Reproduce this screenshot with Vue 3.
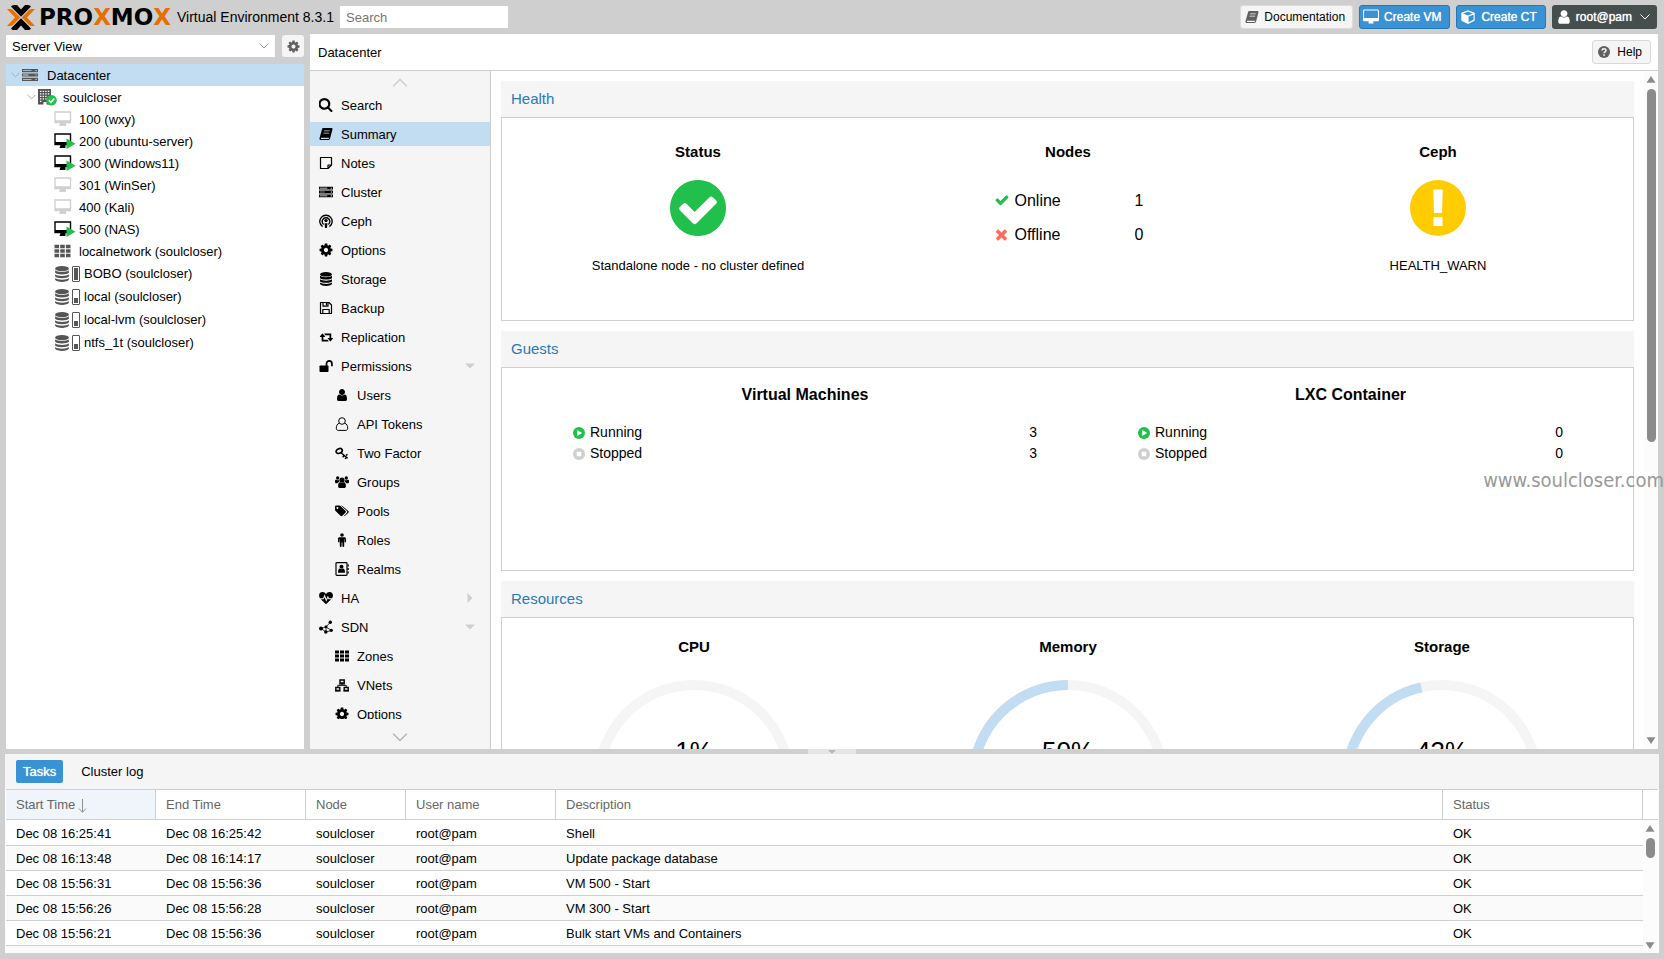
<script setup>
import { h, ref } from 'vue'

const icons = {
  search: { box: '128 128 1664 1664', body: '<path d="M1216 832q0-185-131.5-316.5t-316.5-131.5-316.5 131.5-131.5 316.5 131.5 316.5 316.5 131.5 316.5-131.5 131.5-316.5zm512 832q0 52-38 90t-90 38q-54 0-90-38l-343-342q-179 124-399 124-143 0-273.5-55.5t-225-150-150-225-55.5-273.5 55.5-273.5 150-225 225-150 273.5-55.5 273.5 55.5 225 150 150 225 55.5 273.5q0 220-124 399l343 343q37 37 37 90z"/>' },
  user: { box: '0 0 1792 1792', body: '<path d="M1536 1399q0 109-62.5 187t-150.5 78h-854q-88 0-150.5-78t-62.5-187q0-85 8.5-160.5t31.5-152 58.5-131 94-89 134.5-34.5q131 128 313 128t313-128q76 0 134.5 34.5t94 89 58.5 131 31.5 152 8.5 160.5zm-256-887q0 159-112.5 271.5t-271.5 112.5-271.5-112.5-112.5-271.5 112.5-271.5 271.5-112.5 271.5 112.5 112.5 271.5z"/>' },
  userOutline: { box: '0 0 14 14', body: '<g fill="none" stroke="currentColor"><circle cx="7" cy="4" r="3.3"/><path d="M4.2 6.2C2 7 1.3 9 1.3 11.3 1.3 12.6 2 13.4 3.2 13.4h7.6c1.200 0 1.900-.8 1.900-2.100 0-2.300-.7-4.300-2.900-5.100"/></g>' },
  cog: { box: '64 64 1664 1664', body: '<path fill-rule="evenodd" d="M1152 896q0-106-75-181t-181-75-181 75-75 181 75 181 181 75 181-75 75-181zm512-109v222q0 12-8 23t-20 13l-185 28q-19 54-39 91 35 50 107 138 10 12 10 25t-9 23q-27 37-99 108t-94 71q-12 0-26-9l-138-108q-44 23-91 38-16 136-29 186-7 28-36 28h-222q-14 0-24.500-8.500t-11.500-21.500l-28-184q-49-16-90-37l-141 107q-10 9-25 9-14 0-25-11-126-114-165-168-7-10-7-23 0-12 8-23 15-21 51-66.500t54-70.500q-27-50-41-99l-183-27q-13-2-21-12.500t-8-23.500v-222q0-12 8-23t19-13l186-28q14-46 39-92-40-57-107-138-10-12-10-24 0-10 9-23 26-36 98.500-107.500t94.500-71.500q13 0 26 10l138 107q44-23 91-38 16-136 29-186 7-28 36-28h222q14 0 24.500 8.500t11.500 21.500l28 184q49 16 90 37l142-107q9-9 24-9 13 0 25 10 129 119 165 170 7 8 7 22 0 12-8 23-15 21-51 66.500t-54 70.500q26 50 41 98l183 28q13 2 21 12.500t8 23.500z"/>' },
  desktop: { box: '-64 -64 1920 1920', body: '<path fill-rule="evenodd" d="M1728 992v-832q0-13-9.500-22.500t-22.500-9.500h-1600q-13 0-22.500 9.500t-9.500 22.500v832q0 13 9.500 22.500t22.500 9.500h1600q13 0 22.500-9.500t9.500-22.500zm128-832v1088q0 66-47 113t-113 47h-544q0 37 16 77.500t32 71 16 43.500q0 26-19 45t-45 19h-512q-26 0-45-19t-19-45q0-14 16-44t32-70 16-78h-544q-66 0-113-47t-47-113v-1088q0-66 47-113t113-47h1600q66 0 113 47t47 113z"/>' },
  book: { box: '0 0 14 14', body: '<path fill-rule="evenodd" d="M4.500 1h8c.8 0 1.200.6 1 1.300L11 11.800c-.2.700-.8 1.200-1.500 1.200H2C.9 13 .2 12.200.5 11.200L3 2.200C3.200 1.500 3.800 1 4.500 1ZM5.200 3.600l-.2.700h5.600l.2-.7ZM4.600 5.700l-.2.700H10l.2-.7ZM2 10.700c-.3.700 0 1.300.7 1.300h6.600c.4 0 .7-.3.800-.7l.2-.6Z"/>' },
  note: { box: '0 0 14 14', body: '<path d="M1.500 1.500h11v7.500l-3.500 3.500h-7.500zM12.500 9H9v3.500" fill="none" stroke="currentColor" stroke-width="1.200" stroke-linejoin="round"/>' },
  server: { box: '0 0 16 14', body: '<path fill-rule="evenodd" d="M0 1h16v3.200H0ZM0 5.400h16v3.200H0ZM0 9.800h16V13H0Z M1 2.200v.8h8.500v-.8ZM1 6.600v.8h5.500v-.8ZM1 11v.8h8.500V11ZM13.500 2v1.200h1.200V2ZM13.500 6.400v1.200h1.200V6.400ZM13.500 10.800V12h1.200v-1.200Z"/>' },
  ceph: { box: '0 0 14 14', body: '<g fill="none" stroke="currentColor" stroke-width="1.400"><path d="M3.600 12.600A6.200 6.200 0 1 1 10.400 12.600"/><path d="M4.600 10.500A3.800 3.800 0 1 1 9.400 10.500"/></g><circle cx="7" cy="6.600" r="1.700"/><path d="M5.500 9.200h3L8 14H6Z"/>' },
  database: { box: '0 0 14 14', body: '<ellipse cx="7" cy="2.300" rx="6" ry="2.300"/><path d="M1 3.800C2.500 5.700 11.500 5.700 13 3.800V6C11.500 8 2.500 8 1 6ZM1 7.300C2.500 9.200 11.500 9.200 13 7.300V9.200C11.500 11.200 2.500 11.200 1 9.200ZM1 10.600C2.500 12.500 11.500 12.500 13 10.600V12.100C11.500 14.600 2.500 14.600 1 12.100Z"/>' },
  floppy: { box: '0 0 14 14', body: '<g fill="none" stroke="currentColor" stroke-width="1.200" stroke-linejoin="round"><path d="M1.500 1.500h8.500l2.500 2.500v8.500h-11zM3.800 12.500v-4h6.400v4M4 1.500v3.700h5V1.500"/></g><path d="M6.800 2h1.400v2.300H6.800z"/>' },
  retweet: { box: '-64 64 2048 1664', body: '<path d="M1344 1504q0 13-9.500 22.500t-22.500 9.500h-960q-8 0-13.500-2t-9-7-5.500-8-3-11.500-1-11.500v-600h-192q-26 0-45-19t-19-45q0-24 15-41l320-384q19-22 49-22t49 22l320 384q15 17 15 41 0 26-19 45t-45 19h-192v384h576q16 0 25 11l160 192q7 10 7 21zm640-416q0 24-15 41l-320 384q-20 23-49 23t-49-23l-320-384q-15-17-15-41 0-26 19-45t45-19h192v-384h-576q-16 0-25-12l-160-192q-7-9-7-20 0-13 9.500-22.500t22.500-9.500h960q8 0 13.500 2t9 7 5.500 8 3 11.500 1 11.500v600h192q26 0 45 19t19 45z"/>' },
  unlock: { box: '0 0 14 14', body: '<rect x="0.500" y="6.500" width="9" height="6.500" rx="0.800"/><path d="M7.500 7V4.600a2.700 2.700 0 0 1 5.400 0v2.600" fill="none" stroke="currentColor" stroke-width="1.700"/>' },
  key: { box: '0 0 14 14', body: '<g fill="none" stroke="currentColor"><ellipse cx="4.200" cy="5" rx="3.200" ry="2.300" transform="rotate(-25 4.200 5)" stroke-width="1.700"/><path d="M6.300 7l6.300 5.300M9.200 9.400l-1.500 1.800M11.400 11.200l-1.300 1.700M11 9.300l1.500-1" stroke-width="1.500"/></g>' },
  group: { box: '0 0 15 14', body: '<circle cx="7.500" cy="5" r="2.700"/><circle cx="2.900" cy="2.700" r="1.800"/><circle cx="12.100" cy="2.700" r="1.800"/><path d="M3.300 11.200C3.300 8.800 4.200 7.200 5.500 7.200c1.200 1 2.800 1 4 0 1.300 0 2.200 1.600 2.200 4 0 1.300-.7 2.300-1.900 2.300H5.200c-1.200 0-1.900-1-1.900-2.300ZM0 7V5.800C0 5 .5 4.500 1.300 4.600c1 .6 1.800.5 2.700.1 0 1 .3 1.800.8 2.400-1 .1-1.600.5-2 1.200H1.500C.5 8.300 0 7.800 0 7ZM15 7V5.800c0-.8-.5-1.300-1.300-1.200-1 .6-1.800.5-2.700.1 0 1-.3 1.800-.8 2.400 1 .1 1.600.5 2 1.200h1.300c1 0 1.500-.5 1.500-1.300Z"/>' },
  tags: { box: '0 0 15 14', body: '<path fill-rule="evenodd" d="M0 2.500C0 1.700.6 1.200 1.400 1.200H4.500c.7 0 1.300.3 1.800.8l5 4.900c.6.600.6 1.200 0 1.800L7.800 12.200c-.6.600-1.300.6-1.900 0L.9 7.200C.3 6.600 0 6 0 5.300ZM2.600 2.700a1 1 0 1 0 .01 0Z"/><path d="M6.500 1.200c.7 0 1.300.3 1.800.8l6 5c.6.600.6 1.200 0 1.800L10.800 12.200c-.5.500-1 .6-1.500.3l3.500-3.700c.5-.6.5-1.200 0-1.800Z"/>' },
  male: { box: '0 0 14 14', body: '<circle cx="7" cy="2" r="1.800"/><path d="M4.500 4.200h5c.9 0 1.500.6 1.500 1.500v3.500H9.600V6.300h-.4V13.300c0 .9-1.800.9-1.800 0V9.400h-.8v3.900c0 .9-1.800.9-1.800 0V6.300h-.4v2.900H3V5.700c0-.9.600-1.500 1.500-1.500Z"/>' },
  address: { box: '0 0 14 14', body: '<rect x="1" y="0.700" width="11" height="12.600" rx="0.800" fill="none" stroke="currentColor" stroke-width="1.200"/><path d="M12.500 2.500h1.300v2h-1.300zM12.500 6h1.300v2h-1.300zM12.500 9.500h1.300v2h-1.300z"/><circle cx="6.500" cy="4.700" r="2"/><path d="M3 10.700C3 8 3.800 6.800 5 6.600c1 .7 2 .7 3 0 1.200.2 2 1.400 2 4.100Z"/>' },
  heartbeat: { box: '0 0 14 14', body: '<path d="M7 13.200L1.800 8.200H4.700L5.600 6.200 7.200 10.800 8.900 7l.6 1.200h2.700ZM.9 7.200C-.8 4.200.2 1.200 3.500 1.100 5.200 1.100 6.200 2 7 2.900 7.800 2 8.800 1.100 10.500 1.100c3.300.1 4.300 3.100 2.600 6.100h-3L8.900 4.700 7.300 8.100 5.700 3.300 4.100 7.200Z"/>' },
  sdn: { box: '0 0 14 14', body: '<path d="M2 8.500L7 7l4.500-5M7 7v5M7 7l5.500 3.500M2 8.500L7 12l5.500-1.500" fill="none" stroke="currentColor" stroke-width="0.800"/><circle cx="2" cy="8.500" r="2"/><circle cx="7" cy="6.800" r="1.500"/><circle cx="11.300" cy="2.300" r="1.700"/><circle cx="6.800" cy="12" r="1.700"/><circle cx="12.300" cy="10.300" r="1.600"/>' },
  grid: { box: '0 0 14 14', body: '<path d="M0 1.500h4v3H0zM5 1.500h4v3H5zM10 1.500h4v3h-4zM0 5.500h4v3H0zM5 5.500h4v3H5zM10 5.500h4v3h-4zM0 9.500h4v3H0zM5 9.500h4v3H5zM10 9.500h4v3h-4z"/>' },
  vnets: { box: '0 0 14 14', body: '<g fill="none" stroke="currentColor"><path d="M5 2h4.200v3H5zM.8 9.500h4v3h-4zM9.200 9.500h4v3h-4z" stroke-width="1.400"/><path d="M7 5v2.300M2.800 9V7.300h8.400V9M4 6h6M0 13h5.600M8.400 13H14"/></g>' },
  cube: { box: '-1 -1 16 16', body: '<path d="M7 .3l6 2.300c.5.200.7.500.7 1v6.300c0 .5-.2.800-.6 1L7 13.900.9 10.900c-.4-.2-.6-.5-.6-1V3.600c0-.5.200-.8.700-1Z"/><path d="M7 1.700l5 1.900-5 1.900-5-1.900ZM7.600 6.600l4.900-1.900v5.100l-4.900 2.500Z" fill="#3892d4"/>' },
  help: { box: '0 0 14 14', body: '<circle cx="7" cy="7" r="7"/><path d="M4.700 5.200c.1-2.600 4.600-2.600 4.600.1 0 1.700-2.200 1.500-2.200 3.200" fill="none" stroke="#f5f5f5" stroke-width="1.800"/><rect x="6.100" y="9.700" width="1.900" height="1.700" fill="#f5f5f5"/>' },
  check: { box: '64 128 1664 1536', body: '<path d="M1671 566q0 40-28 68l-724 724-136 136q-28 28-68 28t-68-28l-136-136-362-362q-28-28-28-68t28-68l136-136q28-28 68-28t68 28l294 295 656-657q28-28 68-28t68 28l136 136q28 28 28 68z"/>' },
  times: { box: '192 192 1408 1408', body: '<path d="M1490 1322q0 40-28 68l-136 136q-28 28-68 28t-68-28l-294-294-294 294q-28 28-68 28t-68-28l-136-136q-28-28-28-68t28-68l294-294-294-294q-28-28-28-68t28-68l136-136q28-28 68-28t68 28l294 294 294-294q28-28 68-28t68 28l136 136q28 28 28 68t-28 68l-294 294 294 294q28 28 28 68z"/>' },
  ok: { box: '128 128 1536 1536', body: '<path fill-rule="evenodd" d="M1412 734q0-28-18-46l-91-90q-19-19-45-19t-45 19l-408 407-226-226q-19-19-45-19t-45 19l-91 90q-18 18-18 46 0 27 18 45l362 362q19 19 45 19 27 0 46-19l543-543q18-18 18-45zm252 162q0 209-103 385.500t-279.500 279.500-385.500 103-385.500-103-279.500-279.500-103-385.500 103-385.500 279.500-279.500 385.500-103 385.500 103 279.500 279.500 103 385.500z"/>' },
  warn: { box: '0 0 56 56', body: '<circle cx="28" cy="28" r="28"/><path d="M23.200 9.500h9.600l-.8 23.500h-8zM23.500 37h9v9h-9z" fill="#fff"/>' },
  play: { box: '0 0 12 12', body: '<circle cx="6" cy="6" r="6"/><path d="M4.200 3l5 3-5 3z" fill="#fff"/>' },
  stop: { box: '0 0 12 12', body: '<circle cx="6" cy="6" r="6"/><rect x="3.700" y="3.700" width="4.600" height="4.600" rx="0.500" fill="#fff"/>' },
  building: { box: '0 0 19 17', body: '<path fill-rule="evenodd" d="M0 0h13v15.500H8.500V13h-3v2.500H0ZM2 1.700v1.200h1.400V1.700ZM4.600 1.700v1.200H6V1.700ZM7.200 1.700v1.200h1.400V1.700ZM9.800 1.700v1.200h1.400V1.700ZM2 4.200v1.200h1.400V4.200ZM4.600 4.200v1.200H6V4.200ZM7.200 4.200v1.200h1.400V4.200ZM9.800 4.200v1.200h1.400V4.200ZM2 6.700v1.200h1.400V6.700ZM4.600 6.700v1.200H6V6.700ZM7.200 6.700v1.200h1.400V6.700ZM2 9.200v1.200h1.400V9.200ZM4.600 9.200v1.200H6V9.200ZM7.200 9.200v1.200h1.400V9.200ZM2 11.700v1.200h1.400v-1.200Z"/><circle cx="13.500" cy="11.300" r="5.300" fill="#21bf4b"/><path d="M10.900 11.300l2 2 3.400-3.700" fill="none" stroke="#fff" stroke-width="1.600"/>' },
  vmOff: { box: '0 0 22 16', body: '<path d="M1 1h15.500v10.500H1z" fill="#fff" stroke="#d0d0d0" stroke-width="1.400"/><path d="M1 9.300h15.500v2.500H1zM6 12h6v3H5z" fill="#d0d0d0"/>' },
  vmOn: { box: '0 0 22 16', body: '<path d="M1 1h15.500v10.500H1z" fill="#fff" stroke="#000" stroke-width="1.400"/><path d="M1 9h15.500v2.800H1zM6.500 12h5v3h-6z" fill="#000"/><path d="M12.500 5.500l9 5.200-9 5.200z" fill="#21bf4b"/>' },
  down: { box: '0 0 10 6', body: '<path d="M.5.500L5 5 9.500.500" fill="none" stroke="currentColor"/>' },
  up: { box: '0 0 10 6', body: '<path d="M.5 5.500L5 1 9.500 5.500" fill="none" stroke="currentColor"/>' },
  triDown: { box: '0 0 10 10', body: '<path d="M0 2.500h10L5 7.500z"/>' },
  triUp: { box: '0 0 10 10', body: '<path d="M0 8.500h10L5 1z"/>' },
  triDownTall: { box: '0 0 10 10', body: '<path d="M0 1.500h10L5 9z"/>' },
  triRight: { box: '0 0 10 10', body: '<path d="M2.500 0v10L7.500 5z"/>' },
  sort: { box: '0 0 9 15', body: '<path d="M4.500 0v14M.7 10.200l3.800 4 3.800-4" fill="none" stroke="currentColor"/>' }
}

const Icon = (props) => {
  const i = icons[props.name]
  return h('svg', { viewBox: i.box, fill: 'currentColor', 'aria-hidden': 'true', innerHTML: i.body })
}
Icon.props = ['name']

const view = ref('server')
const query = ref('')

const guests = [
  { name: '100 (wxy)', icon: 'vmOff' },
  { name: '200 (ubuntu-server)', icon: 'vmOn' },
  { name: '300 (Windows11)', icon: 'vmOn' },
  { name: '301 (WinSer)', icon: 'vmOff' },
  { name: '400 (Kali)', icon: 'vmOff' },
  { name: '500 (NAS)', icon: 'vmOn' }
]
const storages = [
  { name: 'BOBO (soulcloser)', used: 95 },
  { name: 'local (soulcloser)', used: 38 },
  { name: 'local-lvm (soulcloser)', used: 34 },
  { name: 'ntfs_1t (soulcloser)', used: 34 }
]
const menu = [
  { label: 'Search', icon: 'search' },
  { label: 'Summary', icon: 'book', active: true },
  { label: 'Notes', icon: 'note' },
  { label: 'Cluster', icon: 'server' },
  { label: 'Ceph', icon: 'ceph' },
  { label: 'Options', icon: 'cog' },
  { label: 'Storage', icon: 'database' },
  { label: 'Backup', icon: 'floppy' },
  { label: 'Replication', icon: 'retweet' },
  { label: 'Permissions', icon: 'unlock', arrow: 'triDown' },
  { label: 'Users', icon: 'user', sub: true },
  { label: 'API Tokens', icon: 'userOutline', sub: true },
  { label: 'Two Factor', icon: 'key', sub: true },
  { label: 'Groups', icon: 'group', sub: true },
  { label: 'Pools', icon: 'tags', sub: true },
  { label: 'Roles', icon: 'male', sub: true },
  { label: 'Realms', icon: 'address', sub: true },
  { label: 'HA', icon: 'heartbeat', arrow: 'triRight' },
  { label: 'SDN', icon: 'sdn', arrow: 'triDown' },
  { label: 'Zones', icon: 'grid', sub: true },
  { label: 'VNets', icon: 'vnets', sub: true },
  { label: 'Options', icon: 'cog', sub: true }
]
const guestStats = [
  { title: 'Virtual Machines', running: 3, stopped: 3, cls: 'vms' },
  { title: 'LXC Container', running: 0, stopped: 0, cls: 'lxc' }
]
const gauges = [
  { title: 'CPU', value: 1, arc: 0 },
  { title: 'Memory', value: 50, arc: 50 },
  { title: 'Storage', value: 43, arc: 43 }
]
const tasks = [
  ['Dec 08 16:25:41', 'Dec 08 16:25:42', 'soulcloser', 'root@pam', 'Shell', 'OK'],
  ['Dec 08 16:13:48', 'Dec 08 16:14:17', 'soulcloser', 'root@pam', 'Update package database', 'OK'],
  ['Dec 08 15:56:31', 'Dec 08 15:56:36', 'soulcloser', 'root@pam', 'VM 500 - Start', 'OK'],
  ['Dec 08 15:56:26', 'Dec 08 15:56:28', 'soulcloser', 'root@pam', 'VM 300 - Start', 'OK'],
  ['Dec 08 15:56:21', 'Dec 08 15:56:36', 'soulcloser', 'root@pam', 'Bulk start VMs and Containers', 'OK']
]
</script>

<template>
  <div class="app">
    <header class="top">
      <a class="logo" href="#" aria-label="Proxmox">
        <svg viewBox="0 0 28 25" aria-hidden="true">
          <path d="M4 1.500Q5 0 7 0H10L14 4.500 18 0H21Q23 0 24 1.500L14 11.800ZM4 23.500Q5 25 7 25H10L14 20.500 18 25H21Q23 25 24 23.500L14 13.200Z" fill="#000" />
          <path d="M0 4H3Q5 4 6 5L13.200 12.500 6 20Q5 21 3 21H0L8 12.500ZM28 4H25Q23 4 22 5L14.800 12.500 22 20Q23 21 25 21H28L20 12.500Z" fill="#e57000" />
        </svg>
        <span class="wordmark">PRO<b>X</b>MO<b>X</b></span>
      </a>
      <span class="version">Virtual Environment 8.3.1</span>
      <input v-model="query" class="search" type="text" placeholder="Search" aria-label="Search" />
      <div class="actions">
        <button class="btn doc"><Icon name="book" />Documentation</button>
        <button class="btn blue"><Icon name="desktop" class="wide" />Create VM</button>
        <button class="btn blue"><Icon name="cube" class="wide" />Create CT</button>
        <button class="btn dark"><Icon name="user" class="wide" />root@pam<Icon name="down" class="caret" /></button>
      </div>
    </header>

    <div class="work">
      <aside class="side">
        <div class="picker">
          <div class="select">
            <select v-model="view" aria-label="View">
              <option value="server">Server View</option>
              <option value="folder">Folder View</option>
            </select>
            <Icon name="down" class="caret" />
          </div>
          <button class="gear" aria-label="Tree settings"><Icon name="cog" /></button>
        </div>
        <ul class="tree">
          <li class="row root"><Icon name="down" class="twist" /><span class="slot"><Icon name="server" class="srv" /></span>Datacenter</li>
          <li class="row node"><Icon name="down" class="twist" /><span class="slot"><Icon name="building" class="bld" /></span>soulcloser</li>
          <li v-for="g in guests" :key="g.name" class="row leaf"><span class="slot"><Icon :name="g.icon" class="vm" /></span>{{ g.name }}</li>
          <li class="row leaf"><span class="slot"><Icon name="grid" class="net" /></span>localnetwork (soulcloser)</li>
          <li v-for="s in storages" :key="s.name" class="row leaf store">
            <Icon name="database" class="db" />
            <span class="usage"><i :style="{ height: s.used + '%' }"></i></span>{{ s.name }}
          </li>
        </ul>
      </aside>

      <section class="center">
        <div class="crumb">
          <span>Datacenter</span>
          <button class="btn help"><Icon name="help" />Help</button>
        </div>
        <div class="split">
          <nav class="menu" aria-label="Datacenter">
            <div class="scroller"><Icon name="up" /></div>
            <div class="items">
              <a v-for="(m, i) in menu" :key="i" href="#" :class="{ active: m.active, sub: m.sub }">
                <Icon :name="m.icon" class="mi" /><span>{{ m.label }}</span>
                <Icon v-if="m.arrow" :name="m.arrow" class="arrow" />
              </a>
            </div>
            <div class="scroller low"><Icon name="down" /></div>
          </nav>

          <main class="content">
            <section class="panel">
              <h2>Health</h2>
              <div class="body health">
                <div class="col">
                  <h3>Status</h3>
                  <Icon name="ok" class="big good" />
                  <p>Standalone node - no cluster defined</p>
                </div>
                <div class="col">
                  <h3>Nodes</h3>
                  <div class="nodes">
                    <Icon name="check" class="good" /><span>Online</span><span class="num">1</span>
                    <Icon name="times" class="bad" /><span>Offline</span><span class="num">0</span>
                  </div>
                </div>
                <div class="col">
                  <h3>Ceph</h3>
                  <Icon name="warn" class="big warn" />
                  <p>HEALTH_WARN</p>
                </div>
              </div>
            </section>

            <section class="panel">
              <h2>Guests</h2>
              <div class="body guests">
                <div v-for="g in guestStats" :key="g.title" :class="g.cls">
                  <h3>{{ g.title }}</h3>
                  <div class="stat"><Icon name="play" class="good" />Running<span>{{ g.running }}</span></div>
                  <div class="stat"><Icon name="stop" class="idle" />Stopped<span>{{ g.stopped }}</span></div>
                </div>
              </div>
            </section>

            <section class="panel">
              <h2>Resources</h2>
              <div class="body resources">
                <div v-for="g in gauges" :key="g.title">
                  <h3>{{ g.title }}</h3>
                  <svg class="gauge" viewBox="0 0 200 110" role="img" :aria-label="g.title">
                    <path d="M5 100A95 95 0 0 1 195 100" fill="none" stroke="#f5f5f5" stroke-width="10" />
                    <path v-if="g.arc" d="M5 100A95 95 0 0 1 195 100" fill="none" stroke="#c2ddf2" stroke-width="10" pathLength="100" :stroke-dasharray="g.arc + ' 200'" />
                    <text x="100" y="80" text-anchor="middle">{{ g.value }}%</text>
                  </svg>
                </div>
              </div>
            </section>
          </main>
          <div class="bar" aria-hidden="true">
            <Icon name="triUp" /><div class="track"><i class="thumb"></i></div><Icon name="triDownTall" />
          </div>
        </div>
      </section>
    </div>

    <div class="splitter"><button aria-label="Collapse log panel"><Icon name="triDown" /></button></div>

    <section class="log">
      <div class="tabs">
        <button class="on">Tasks</button>
        <button>Cluster log</button>
      </div>
      <div class="grid">
        <table>
          <colgroup>
            <col class="w150" /><col class="w150" /><col class="w100" /><col class="w150" /><col /><col class="w200" /><col class="w15" />
          </colgroup>
          <thead>
            <tr>
              <th class="sorted">Start Time<Icon name="sort" /></th>
              <th>End Time</th>
              <th>Node</th>
              <th>User name</th>
              <th>Description</th>
              <th>Status</th>
              <td></td>
            </tr>
          </thead>
          <tbody>
            <tr v-for="(t, i) in tasks" :key="i">
              <td v-for="(c, j) in t" :key="j">{{ c }}</td>
              <td class="gutter"></td>
            </tr>
            <tr>
              <td colspan="6"></td>
              <td class="gutter"></td>
            </tr>
          </tbody>
        </table>
        <div class="bar" aria-hidden="true">
          <Icon name="triUp" /><div class="track"><i class="thumb"></i></div><Icon name="triDownTall" />
        </div>
      </div>
    </section>

    <div class="watermark">www.soulcloser.com</div>
  </div>
</template>

<style>
body {
  margin: 0;
  overflow: hidden;
}
</style>

<style scoped>
* {
  box-sizing: border-box;
}
.app {
  display: flex;
  flex-direction: column;
  position: relative;
  height: 100vh;
  padding: 0 5px 6px;
  background: #cfcfcf;
  color: #000;
  font: 13px/17px "Liberation Sans", Arial, sans-serif;
  overflow: hidden;
}
svg {
  display: block;
  flex: none;
}
button,
input,
select {
  font: inherit;
  color: inherit;
  border: 0;
  padding: 0;
  margin: 0;
}
h2,
h3,
p,
ul {
  margin: 0;
  padding: 0;
}

.top {
  display: flex;
  align-items: center;
  flex: none;
  height: 34px;
  padding: 0 2px;
}
.logo {
  display: flex;
  align-items: center;
  flex: none;
  width: 170px;
  gap: 4px;
  color: #000;
  text-decoration: none;
}
.logo svg {
  width: 28px;
  height: 25px;
}
.wordmark {
  font: bold 23px/25px "DejaVu Sans", sans-serif;
}
.wordmark b {
  color: #e57000;
}
.version {
  width: 163px;
  font-size: 14px;
  white-space: nowrap;
}
.search {
  width: 168px;
  height: 22px;
  padding: 0 6px;
  background: #fff;
}
.search::placeholder {
  color: #767676;
  opacity: 1;
}
.actions {
  display: flex;
  gap: 6px;
  margin-left: auto;
}
.btn {
  display: flex;
  align-items: center;
  height: 24px;
  border-radius: 3px;
  font-size: 12px;
  white-space: nowrap;
}
.btn svg {
  width: 14px;
  height: 14px;
}
.btn svg.wide {
  width: 16px;
  height: 16px;
}
.doc {
  gap: 5px;
  padding: 0 7px 0 4px;
  border: 1px solid #dcdcdc;
  background: #f5f5f5;
}
.doc svg,
.help svg {
  color: #606060;
}
.blue {
  gap: 5px;
  padding: 0 8px 0 3px;
  border: 1px solid #2478b5;
  background: #3892d4;
  color: #fff;
  text-shadow: 0 0 1px #fff;
}
.dark {
  gap: 4px;
  padding: 0 7px 0 4px;
  background: #464d4d;
  color: #fff;
  text-shadow: 0 0 1px #fff;
}
.btn svg.caret {
  width: 10px;
  height: 6px;
  margin-left: 4px;
}

.work {
  display: flex;
  flex: 1;
  min-height: 0;
  gap: 6px;
  padding: 0 1px;
}
.side {
  display: flex;
  flex-direction: column;
  flex: none;
  width: 298px;
  padding-top: 1px;
}
.picker {
  display: flex;
  gap: 7px;
  height: 29px;
}
.select {
  position: relative;
  flex: 1;
  height: 22px;
}
.select select {
  width: 100%;
  height: 22px;
  padding: 0 6px;
  appearance: none;
  border-radius: 0;
  background: #fff;
}
.select .caret {
  position: absolute;
  top: 8px;
  right: 6px;
  width: 10px;
  height: 6px;
  color: #999;
  pointer-events: none;
}
.gear {
  display: flex;
  align-items: center;
  justify-content: center;
  width: 22px;
  height: 22px;
  border-radius: 3px;
  background: #f5f5f5;
  color: #606060;
}
.gear svg {
  width: 13px;
  height: 13px;
}
.tree {
  flex: 1;
  list-style: none;
  background: #fff;
  overflow: hidden;
}
.row {
  display: flex;
  align-items: center;
  height: 22px;
  white-space: nowrap;
}
.root {
  padding-left: 5px;
  background: #c2ddf2;
}
.node {
  padding-left: 21px;
}
.leaf {
  padding-left: 48px;
}
.store {
  height: 23px;
}
.twist {
  width: 9px;
  height: 6px;
  margin-right: 2px;
  color: #a5a5a5;
}
.slot {
  width: 25px;
  flex: none;
  color: #555;
}
.srv {
  width: 16px;
  height: 14px;
}
.bld {
  width: 19px;
  height: 17px;
}
.vm {
  width: 22px;
  height: 16px;
}
.net {
  width: 17px;
  height: 16px;
}
.db {
  width: 16px;
  height: 16px;
  color: #555;
}
.usage {
  display: flex;
  align-items: flex-end;
  width: 8px;
  height: 16px;
  margin: 0 4px 0 2px;
  padding: 1px;
  border: 1px solid #555;
  border-radius: 1px;
}
.usage i {
  width: 100%;
  background: #555;
}

.center {
  display: flex;
  flex-direction: column;
  flex: 1;
  min-width: 0;
  background: #fff;
}
.crumb {
  display: flex;
  align-items: center;
  justify-content: space-between;
  flex: none;
  height: 37px;
  padding: 0 7px 0 8px;
  border-bottom: 1px solid #cfcfcf;
}
.help {
  gap: 7px;
  padding: 0 8px 0 5px;
  border: 1px solid #d8d8d8;
  background: #f5f5f5;
}
.btn.help svg {
  width: 12px;
  height: 12px;
}
.split {
  display: flex;
  flex: 1;
  min-height: 0;
}
.menu {
  display: flex;
  flex-direction: column;
  flex: none;
  width: 181px;
  border-right: 1px solid #cfcfcf;
  background: #f5f5f5;
}
.scroller {
  display: flex;
  align-items: center;
  justify-content: center;
  flex: none;
  height: 22px;
  color: #cfcfcf;
}
.scroller svg {
  width: 16px;
  height: 9px;
}
.low {
  height: 30px;
  padding-top: 6px;
  color: #b5b5b5;
}
.items {
  display: flex;
  flex-direction: column;
  flex: 1;
  min-height: 0;
  gap: 5px;
  overflow: hidden;
}
.items a {
  display: flex;
  align-items: center;
  flex: none;
  gap: 8px;
  height: 24px;
  padding: 0 15px 0 9px;
  color: #000;
  text-decoration: none;
}
.items a.sub {
  padding-left: 25px;
}
.items a.active {
  background: #c2ddf2;
}
.mi {
  width: 14px;
  height: 14px;
}
.arrow {
  width: 10px;
  height: 10px;
  margin-left: auto;
  color: #cfcfcf;
}

.content {
  flex: 1;
  min-width: 0;
  padding: 10px 10px 0;
  overflow: hidden;
}
.panel {
  margin-bottom: 10px;
}
.panel h2 {
  height: 36px;
  padding: 0 10px;
  background: #f5f5f5;
  color: #2a7ab5;
  font: 15px/35px "Liberation Sans", Arial, sans-serif;
}
.body {
  display: flex;
  height: 204px;
  border: 1px solid #cfcfcf;
}
.body h3 {
  font-size: 15px;
  line-height: 18px;
  text-align: center;
}
.health {
  padding: 25px 10px 0 11px;
}
.col {
  display: flex;
  flex-direction: column;
  align-items: center;
  flex: 1;
}
.big {
  width: 56px;
  height: 56px;
  margin: 19px 0 21px;
}
.good {
  color: #21bf4b;
}
.bad {
  color: #ff6c59;
}
.warn {
  color: #fc0;
}
.idle {
  color: #cfcfcf;
}
.nodes {
  display: grid;
  grid-template-columns: 14px 114px 20px;
  grid-auto-rows: 34px;
  align-items: center;
  column-gap: 6px;
  margin-top: 22px;
  padding-left: 13px;
  font-size: 16px;
}
.nodes svg {
  width: 14px;
  height: 14px;
}
.nodes svg.bad {
  width: 13px;
  height: 13px;
}
.guests {
  gap: 101px;
  padding: 18px 70px 0 71px;
}
.vms {
  flex: 464;
}
.lxc {
  flex: 425;
}
.guests h3 {
  margin-bottom: 18px;
  font-size: 16px;
}
.stat {
  display: flex;
  align-items: center;
  gap: 5px;
  height: 21px;
  font-size: 14px;
}
.stat svg {
  width: 12px;
  height: 12px;
}
.stat span {
  margin-left: auto;
}
.resources {
  padding: 20px 4px 0 5px;
}
.resources > div {
  flex: 1;
}
.gauge {
  width: 200px;
  height: 110px;
  margin: 24px auto 0;
}
.gauge text {
  font: 26px "Liberation Sans", Arial, sans-serif;
  fill: #000;
}
.bar {
  display: flex;
  flex-direction: column;
  align-items: center;
  width: 14px;
  background: #fcfcfc;
  color: #8b8b8b;
}
.bar svg {
  width: 10px;
  height: 9px;
}
.split > .bar {
  flex: none;
  padding: 4px 0;
}
.track {
  flex: 1;
  width: 9px;
  padding: 5px 0;
}
.thumb {
  display: block;
  height: 55%;
  border-radius: 5px;
  background: #8b8b8b;
}

.splitter {
  display: flex;
  justify-content: center;
  flex: none;
  height: 5px;
}
.splitter button {
  display: flex;
  align-items: center;
  justify-content: center;
  width: 48px;
  height: 5px;
  background: #e6e6e6;
  color: #b8b8b8;
}
.splitter svg {
  width: 8px;
  height: 8px;
}

.log {
  flex: none;
  background: #fff;
}
.tabs {
  display: flex;
  gap: 7px;
  padding: 6px 11px 6px;
  background: #f5f5f5;
}
.tabs button {
  height: 23px;
  padding: 0 11px;
  border-radius: 2px;
  background: none;
}
.tabs .on {
  padding: 0 7px;
  background: #3892d4;
  color: #fff;
  text-shadow: 0 0 1px #fff;
}
.grid {
  position: relative;
  height: 164px;
  padding: 0 1px;
  overflow: hidden;
}
table {
  width: 100%;
  table-layout: fixed;
  border-collapse: separate;
  border-spacing: 0;
}
.w150 {
  width: 150px;
}
.w100 {
  width: 100px;
}
.w200 {
  width: 200px;
}
.w15 {
  width: 15px;
}
thead tr > * {
  height: 31px;
  border-top: 1px solid #cfcfcf;
  border-bottom: 1px solid #cfcfcf;
}
th {
  padding: 0 10px;
  border-right: 1px solid #cfcfcf;
  color: #666;
  font-weight: 400;
  text-align: left;
}
th.sorted {
  background: #eff5fb;
}
th svg {
  display: inline-block;
  width: 9px;
  height: 14px;
  margin-left: 3px;
  vertical-align: -4px;
  color: #888;
}
tbody td {
  height: 25px;
  padding: 1px 10px 0;
  border-bottom: 1px solid #cfcfcf;
  white-space: nowrap;
}
tbody tr:first-child td {
  height: 26px;
  padding-top: 2px;
}
tbody tr:nth-child(even) td {
  background: #fafafa;
}
tbody tr td.gutter {
  padding: 0;
  border: 0;
  background: #fcfcfc;
}
.grid .bar {
  position: absolute;
  top: 31px;
  right: 2px;
  bottom: 0;
  width: 14px;
  padding: 4px 0 3px;
}
.grid .thumb {
  height: 20%;
}
.watermark {
  position: absolute;
  right: 0;
  top: 466px;
  color: #999;
  font: 20px/28px "DejaVu Sans Condensed", "Noto Sans", sans-serif;
  pointer-events: none;
}
</style>
